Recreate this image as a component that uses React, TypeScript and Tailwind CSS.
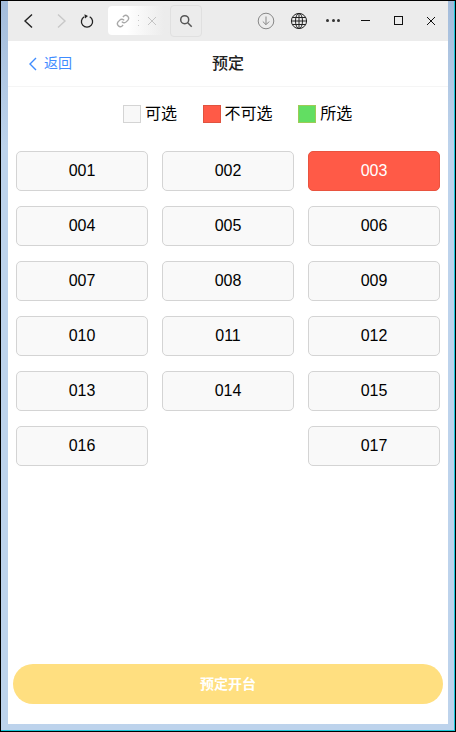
const seats = [
  "001", "002", "003", "004", "005", "006", "007", "008", "009",
  "010", "011", "012", "013", "014", "015", "016", "", "017",
];
const taken = ["003"];

function Toolbar() {
  return (
    <div className="flex h-[40px] items-center bg-[#ececec] pb-px text-[#222]">
      <svg width="12" height="16" viewBox="0 0 12 16" fill="none" stroke="#222" strokeWidth="1.4" className="ml-[14px]">
        <path d="M10 1.500 3 8l7 6.500" />
      </svg>
      <svg width="12" height="16" viewBox="0 0 12 16" fill="none" stroke="#c8c8c8" strokeWidth="1.4" className="ml-[22px]">
        <path d="M2 1.500 9 8l-7 6.500" />
      </svg>
      <svg width="14" height="16" viewBox="0 0 14 16" fill="none" stroke="#222" strokeWidth="1.3" className="ml-[12px]">
        <path d="M4.300 3.700a5.600 5.600 0 1 0 5.400 0" />
        <path d="M4.500 1.200 8 3 5 5.400z" fill="#222" stroke="none" />
      </svg>
      <div className="ml-[14px] flex h-[29px] w-[62px] items-center rounded-l-[4px] bg-gradient-to-r from-white from-30% to-[#ececec] to-90%">
        <svg width="14" height="14" viewBox="0 0 24 24" fill="none" stroke="#a8a8a8" strokeWidth="2.4" className="ml-[8px]">
          <path d="M10 13a5 5 0 0 0 7.500.5l3-3a5 5 0 0 0-7-7l-1.700 1.700" />
          <path d="M14 11a5 5 0 0 0-7.500-.5l-3 3a5 5 0 0 0 7 7l1.700-1.700" />
        </svg>
        <svg width="1" height="11" viewBox="0 0 1 11" fill="#c8c8c8" className="ml-[8px]">
          <rect y="0" width="1" height="1" />
          <rect y="5" width="1" height="1" />
          <rect y="10" width="1" height="1" />
        </svg>
        <svg width="10" height="10" viewBox="0 0 10 10" stroke="#c4c4c4" strokeWidth="1" className="ml-[8px]">
          <path d="M1 1l8 8M9 1l-8 8" />
        </svg>
      </div>
      <div className="flex h-[32px] w-[32px] items-center justify-center rounded-[4px] border border-[#e0e0e0]">
        <svg width="14" height="14" viewBox="0 0 14 14" fill="none" stroke="#555" strokeWidth="1.5">
          <circle cx="5.700" cy="5.700" r="4" />
          <path d="m8.700 8.700 4 4" />
        </svg>
      </div>
      <svg width="18" height="18" viewBox="0 0 18 18" fill="none" stroke="#888" strokeWidth="1" className="ml-[55px]">
        <circle cx="9" cy="9" r="7.800" />
        <path d="M9 4.500v8M5.800 9.500 9 12.700l3.200-3.200" />
      </svg>
      <svg width="18" height="18" viewBox="0 0 18 18" fill="none" stroke="#222" strokeWidth="1" className="ml-[15px]">
        <circle cx="9" cy="9" r="7.600" />
        <ellipse cx="9" cy="9" rx="3.500" ry="7.600" />
        <path d="M9 1.400v15.200M1.400 9h15.200M2.400 5.500h13.200M2.400 12.500h13.200" />
      </svg>
      <div className="ml-[18px] flex w-[14px] justify-between">
        <span className="h-[3px] w-[3px] rounded-full bg-[#333]" />
        <span className="h-[3px] w-[3px] rounded-full bg-[#333]" />
        <span className="h-[3px] w-[3px] rounded-full bg-[#333]" />
      </div>
      <span className="ml-[21px] h-px w-[9px] bg-[#111]" />
      <span className="ml-[24px] h-[9px] w-[9px] border border-[#111]" />
      <svg width="10" height="10" viewBox="0 0 10 10" stroke="#111" strokeWidth="1" className="ml-[23px]">
        <path d="M1 1l8 8M9 1l-8 8" />
      </svg>
    </div>
  );
}

function Legend({ label, box }: { label: string; box: string }) {
  return (
    <div className="flex items-center gap-[4px]">
      <span className={`h-[18px] w-[18px] border ${box}`} />
      <span className="text-[16px] leading-[18px] text-black">{label}</span>
    </div>
  );
}

export default function App() {
  return (
    <div
      className="flex h-[732px] w-[456px] bg-black p-px"
      style={{ fontFamily: '"Liberation Sans", "Noto Sans CJK SC", sans-serif' }}
    >
      <div className="flex min-w-0 flex-1 flex-col border-r border-b border-[#19c6d8] bg-gradient-to-b from-[#a3bcdb] from-0% to-[#bdd3ec] to-20% pr-[6px] pb-[6px] pl-[7px]">
        <Toolbar />
        <div className="flex min-h-0 flex-1 flex-col bg-white">
          <div className="relative flex h-[46px] items-center justify-center border-b border-[#f5f5f5]">
            <div className="absolute left-[21px] flex items-center gap-[7px] text-[14px] text-[#3f8cff]">
              <svg width="8" height="14" viewBox="0 0 8 14" fill="none" stroke="#3f8cff" strokeWidth="1.400">
                <path d="M7 1 1 7l6 6" />
              </svg>
              <span>返回</span>
            </div>
            <span className="text-[16px] font-medium text-[#222]">预定</span>
          </div>

          <div className="mt-[18px] flex justify-center gap-[25.6px] pl-[19.2px]">
            <Legend label="可选" box="border-[#d4d4d4] bg-[#f8f8f8]" />
            <Legend label="不可选" box="border-[#e0533f] bg-[#ff5a47]" />
            <Legend label="所选" box="border-[#9ccc55] bg-[#62de62]" />
          </div>

          <div className="mt-[28px] grid grid-cols-3 gap-x-[14px] gap-y-[15px] px-[8px]">
            {seats.map((seat, i) =>
              seat === "" ? (
                <div key={i} />
              ) : (
                <div
                  key={seat}
                  className={`flex h-[40px] items-center justify-center rounded-[5px] border text-[16px] ${
                    taken.includes(seat)
                      ? "border-[#e9533f] bg-[#ff5a47] text-white"
                      : "border-[#d4d4d4] bg-[#f9f9f9] text-black"
                  }`}
                >
                  {seat}
                </div>
              )
            )}
          </div>

          <div className="mt-auto mb-[20px] flex justify-center">
            <button className="h-[40px] w-[430px] rounded-full bg-[#ffdf80] text-[14px] font-bold text-white">
              预定开台
            </button>
          </div>
        </div>
      </div>
    </div>
  );
}
